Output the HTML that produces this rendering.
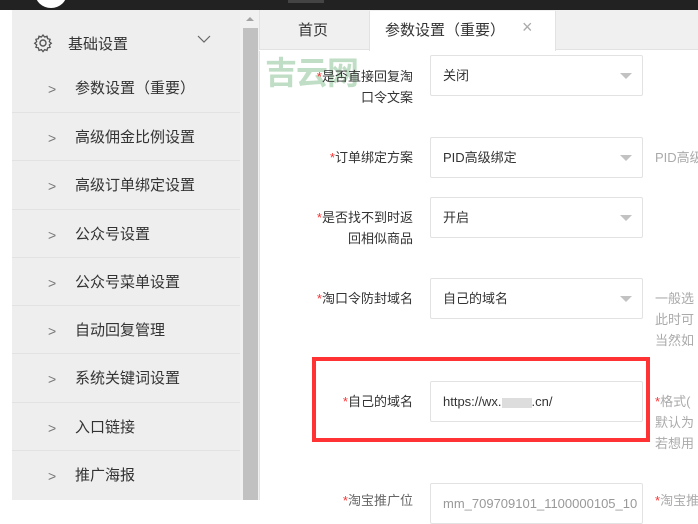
<!DOCTYPE html><html><head><meta charset="utf-8"><style>
*{margin:0;padding:0;box-sizing:border-box}
body{width:698px;height:500px;overflow:hidden;background:#fff;font-family:"Liberation Sans","Noto Sans CJK SC",sans-serif;font-size:14px;color:#333;position:relative}
.a{position:absolute}
.top{left:0;top:0;width:698px;height:10px;background:#222}
.side{left:12px;top:10px;width:228px;height:490px;background:#eee}
.it{position:absolute;left:12px;width:228px;height:48px;border-top:1px solid #e2e2e2;line-height:50px;font-size:15px;color:#333}
.it span{position:absolute;left:36px;color:#777;font-size:14px}
.it b{font-weight:normal;position:absolute;left:63px}
.lbl{position:absolute;right:285px;text-align:right;font-size:13px;color:#333;line-height:21px}
.lbl i{color:#f33;font-style:normal}
.in{position:absolute;left:430px;width:213px;height:41px;border:1px solid #e2e2e2;border-radius:2px;padding-left:12px;line-height:39px;font-size:13px;color:#333;background:#fff}
.in.s:after{content:"";position:absolute;right:10px;top:17px;border:6px solid transparent;border-top-color:#c2c2c2}
.hp{position:absolute;left:655px;font-size:13px;color:#aaa;line-height:21px;white-space:nowrap}
</style></head><body>
<div class="a top"></div>
<div class="a" style="left:35px;top:-22px;width:32px;height:30px;border-radius:50%;background:#fff"></div>
<div class="a" style="left:288px;top:0;width:36px;height:3px;background:#444"></div>
<div class="a side"></div>
<svg class="a" style="left:33px;top:33px" width="20" height="20" viewBox="0 0 20 20"><circle cx="10" cy="10" r="3" fill="none" stroke="#555" stroke-width="1.4"/><path d="M10 2l1.6 2 2.4-.8.6 2.5 2.5.6-.8 2.4 2 1.6-2 1.6.8 2.4-2.5.6-.6 2.5-2.4-.8-1.6 2-1.6-2-2.4.8-.6-2.5-2.5-.6.8-2.4-2-1.6 2-1.6-.8-2.4 2.5-.6.6-2.5 2.4.8z" fill="none" stroke="#555" stroke-width="1.3"/></svg>
<div class="a" style="left:68px;top:33px;font-size:15px">基础设置</div>
<svg class="a" style="left:197px;top:34px" width="14" height="10"><path d="M1 2l6 6 6-6" fill="none" stroke="#666" stroke-width="1.2"/></svg>
<div class="it" style="top:64px;border-top:none"><span>&gt;</span><b>参数设置（重要）</b></div>
<div class="it" style="top:112px"><span>&gt;</span><b>高级佣金比例设置</b></div>
<div class="it" style="top:160px"><span>&gt;</span><b>高级订单绑定设置</b></div>
<div class="it" style="top:209px"><span>&gt;</span><b>公众号设置</b></div>
<div class="it" style="top:257px"><span>&gt;</span><b>公众号菜单设置</b></div>
<div class="it" style="top:305px"><span>&gt;</span><b>自动回复管理</b></div>
<div class="it" style="top:353px"><span>&gt;</span><b>系统关键词设置</b></div>
<div class="it" style="top:402px"><span>&gt;</span><b>入口链接</b></div>
<div class="it" style="top:450px"><span>&gt;</span><b>推广海报</b></div>
<div class="a" style="left:240px;top:10px;width:19px;height:490px;background:#f1f1f1"></div>
<div class="a" style="left:243px;top:28px;width:15px;height:472px;background:#c1c1c1"></div>
<div class="a" style="left:246px;top:17px;border:4px solid transparent;border-bottom-color:#a3a3a3;border-top:0"></div>
<div class="a" style="left:259px;top:10px;width:439px;height:40px;background:#f0f0f0;border-left:1px solid #e2e2e2;border-bottom:1px solid #e2e2e2"></div>
<div class="a" style="left:298px;top:19px;font-size:15px">首页</div>
<div class="a" style="left:369px;top:11px;width:187px;height:40px;background:#fff;border-left:1px solid #e2e2e2;border-right:1px solid #e2e2e2"></div>
<div class="a" style="left:385px;top:19px;font-size:15px">参数设置（重要）</div>
<div class="a" style="left:522px;top:17px;font-size:18px;color:#aaa">×</div>
<div class="a" style="left:259px;top:51px;width:1px;height:449px;background:#e2e2e2"></div>
<div class="a" style="left:265px;top:48px;font-size:32px;font-weight:bold;color:rgba(130,190,140,.5);letter-spacing:-1px">吉云网</div>
<div class="lbl" style="top:66px"><i>*</i>是否直接回复淘<br>口令文案</div>
<div class="in s" style="top:55px">关闭</div>
<div class="lbl" style="top:147px"><i>*</i>订单绑定方案</div>
<div class="in s" style="top:137px">PID高级绑定</div>
<div class="hp" style="top:147px">PID高级</div>
<div class="lbl" style="top:207px"><i>*</i>是否找不到时返<br>回相似商品</div>
<div class="in s" style="top:197px">开启</div>
<div class="lbl" style="top:288px"><i>*</i>淘口令防封域名</div>
<div class="in s" style="top:278px">自己的域名</div>
<div class="hp" style="top:288px">一般选<br>此时可<br>当然如</div>
<div class="a" style="left:312px;top:357px;width:338px;height:85px;border:4px solid #f33"></div>
<div class="lbl" style="top:391px"><i>*</i>自己的域名</div>
<div class="in" style="top:381px">https://wx.<span style="display:inline-block;width:30px;height:10px;background:#ddd;vertical-align:middle"></span>.cn/</div>
<div class="hp" style="top:391px"><span style="color:#f33">*</span>格式(<br>默认为<br>若想用</div>
<div class="lbl" style="top:490px;color:#666"><i>*</i>淘宝推广位</div>
<div class="in" style="top:483px;color:#999">mm_709709101_1100000105_10</div>
<div class="hp" style="top:490px"><span style="color:#f33">*</span>淘宝推</div>
</body></html>
